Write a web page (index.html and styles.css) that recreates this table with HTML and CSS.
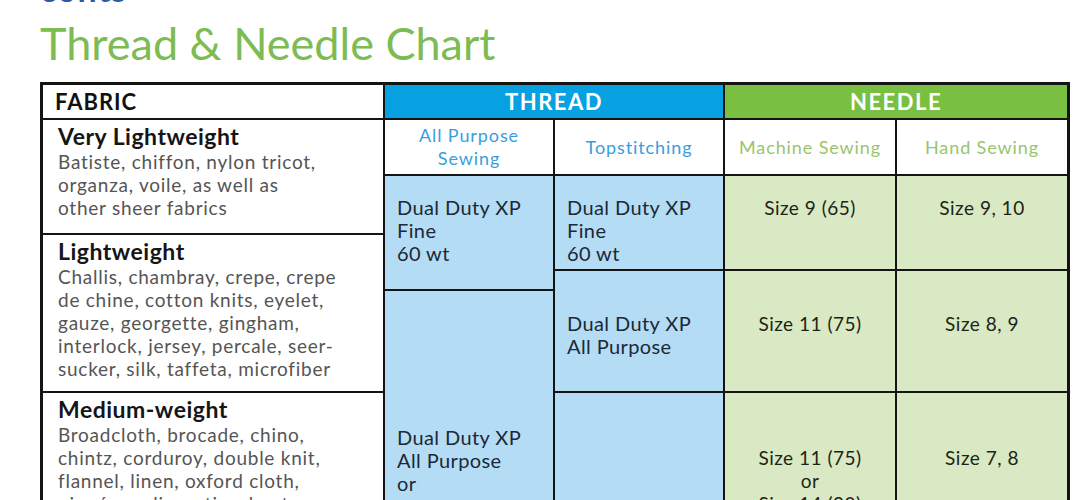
FILE: index.html
```html
<!DOCTYPE html>
<html lang="en">
<head>
<meta charset="utf-8">
<title>Thread &amp; Needle Chart</title>
<link rel="stylesheet" href="styles.css">
</head>
<body>
<div class="page">
  <div class="kicker">conts</div>
  <h1 class="title">Thread &amp; Needle Chart</h1>
  <div class="chart">
    <div class="cell head fabric-head c1 r1">FABRIC</div>
    <div class="cell head thread-head c2-3 r1">THREAD</div>
    <div class="cell head needle-head c4-5 r1">NEEDLE</div>

    <div class="cell sub sub-blue c2 r2">All Purpose<br>Sewing</div>
    <div class="cell sub sub-blue c3 r2">Topstitching</div>
    <div class="cell sub sub-green c4 r2">Machine Sewing</div>
    <div class="cell sub sub-green c5 r2">Hand Sewing</div>

    <div class="cell fabric c1 r2-3">
      <div class="fab-title">Very Lightweight</div>
      <div class="fab-desc">Batiste, chiffon, nylon tricot,<br>organza, voile, as well as<br>other sheer fabrics</div>
    </div>
    <div class="cell fabric c1 r4-6">
      <div class="fab-title">Lightweight</div>
      <div class="fab-desc">Challis, chambray, crepe, crepe<br>de chine, cotton knits, eyelet,<br>gauze, georgette, gingham,<br>interlock, jersey, percale, seer-<br>sucker, silk, taffeta, microfiber</div>
    </div>
    <div class="cell fabric c1 r7">
      <div class="fab-title">Medium-weight</div>
      <div class="fab-desc">Broadcloth, brocade, chino,<br>chintz, corduroy, double knit,<br>flannel, linen, oxford cloth,<br>piqué, poplin, satin, shantung,</div>
    </div>

    <div class="cell thread c2 r3-5 pad-a">Dual Duty XP<br>Fine<br>60 wt</div>
    <div class="cell thread c2 r6-7 pad-d">Dual Duty XP<br>All Purpose<br>or<br>Cotton 100%<br>Mercerized</div>

    <div class="cell thread c3 r3-4 pad-a">Dual Duty XP<br>Fine<br>60 wt</div>
    <div class="cell thread c3 r5-6 pad-b">Dual Duty XP<br>All Purpose</div>
    <div class="cell thread c3 r7"></div>

    <div class="cell needle c4 r3-4 pad-a">Size 9 (65)</div>
    <div class="cell needle c4 r5-6 pad-b">Size 11 (75)</div>
    <div class="cell needle c4 r7 pad-c">Size 11 (75)<br>or<br>Size 14 (90)</div>

    <div class="cell needle c5 r3-4 pad-a">Size 9, 10</div>
    <div class="cell needle c5 r5-6 pad-b">Size 8, 9</div>
    <div class="cell needle c5 r7 pad-c">Size 7, 8</div>
  </div>
</div>
</body>
</html>
```
FILE: styles.css
```css
html, body {
  margin: 0;
  padding: 0;
  background: #ffffff;
}

body {
  font-family: Lato, "Open Sans", Arial, sans-serif;
  overflow: hidden;
}

.page {
  padding-left: 40px;
  width: 1030px;
}

.kicker {
  margin-top: -27px;
  height: 35px;
  font-size: 34px;
  line-height: 32px;
  font-weight: 700;
  color: #2b5ba6;
  letter-spacing: 1px;
  overflow: hidden;
}

.title {
  margin: 0;
  height: 74px;
  font-size: 45px;
  line-height: 70px;
  font-weight: 400;
  color: #7cbc52;
  white-space: nowrap;
}

.chart {
  display: grid;
  grid-template-columns: 340px 168px 168px 170px 170px;
  grid-template-rows: 33px 54px 57px 34px 18px 100px 160px;
  gap: 2px;
  background: #141414;
  border: 3px solid #141414;
  width: 1024px;
}

.cell {
  background: #ffffff;
  box-sizing: border-box;
}

.c1 { grid-column: 1; }
.c2 { grid-column: 2; }
.c3 { grid-column: 3; }
.c4 { grid-column: 4; }
.c5 { grid-column: 5; }
.c2-3 { grid-column: 2 / 4; }
.c4-5 { grid-column: 4 / 6; }

.r1 { grid-row: 1; }
.r2 { grid-row: 2; }
.r7 { grid-row: 7; }
.r2-3 { grid-row: 2 / 4; }
.r3-4 { grid-row: 3 / 5; }
.r3-5 { grid-row: 3 / 6; }
.r4-6 { grid-row: 4 / 7; }
.r5-6 { grid-row: 5 / 7; }
.r6-7 { grid-row: 6 / 8; }

.head {
  display: flex;
  align-items: center;
  font-size: 22px;
  font-weight: 700;
}

.fabric-head {
  padding-left: 12px;
  color: #111111;
  letter-spacing: 1px;
}

.thread-head {
  justify-content: center;
  background: #07a1e2;
  color: #ffffff;
  letter-spacing: 1.5px;
}

.needle-head {
  justify-content: center;
  background: #79bf42;
  color: #ffffff;
  letter-spacing: 1.5px;
}

.sub {
  display: flex;
  align-items: center;
  justify-content: center;
  text-align: center;
  font-size: 18px;
  line-height: 23px;
  letter-spacing: 0.9px;
}

.sub-blue { color: #36a0de; }
.sub-green { color: #98c56d; }

.fabric {
  padding: 3px 10px 0 15px;
}

.fab-title {
  font-size: 23px;
  line-height: 27px;
  font-weight: 700;
  color: #151515;
  letter-spacing: 0.5px;
}

.fab-desc {
  font-size: 19px;
  line-height: 23px;
  color: #555555;
  letter-spacing: 0.75px;
  white-space: nowrap;
}

.thread {
  background: #b4dcf5;
  color: #1c2836;
  font-size: 20px;
  line-height: 23px;
  letter-spacing: 0.4px;
  padding-left: 12px;
  white-space: nowrap;
}

.needle {
  background: #d9e9c3;
  color: #1c2418;
  font-size: 19px;
  line-height: 23px;
  letter-spacing: 0.5px;
  text-align: center;
}

.pad-a { padding-top: 20px; }
.pad-b { padding-top: 41px; }
.pad-c { padding-top: 53px; }
.pad-d { padding-top: 135px; }
```
